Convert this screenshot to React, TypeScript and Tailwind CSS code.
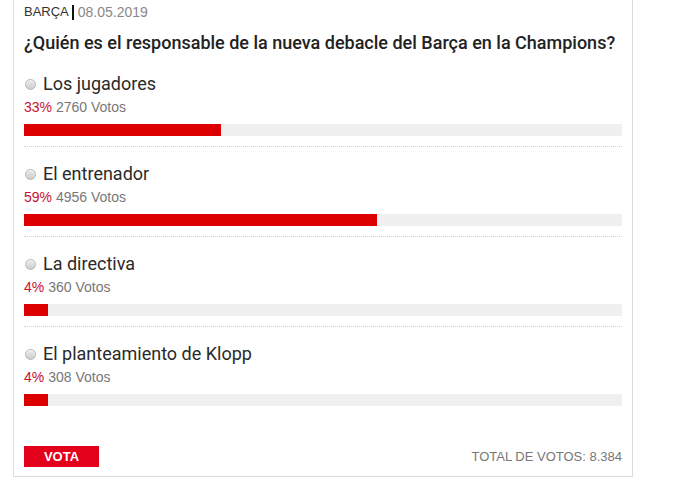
const options = [
  { label: "Los jugadores", pct: 33, votes: 2760 },
  { label: "El entrenador", pct: 59, votes: 4956 },
  { label: "La directiva", pct: 4, votes: 360 },
  { label: "El planteamiento de Klopp", pct: 4, votes: 308 },
];

const Radio = () => (
  <span className="inline-block h-[11px] w-[11px] shrink-0 rounded-full border border-[#b5b5b5] bg-gradient-to-b from-[#e9e9e9] to-[#cfcfcf] shadow-[inset_0_1px_1px_rgba(255,255,255,0.8)]" />
);

export default function App() {
  return (
    <div className="h-[485px] w-[686px] bg-white font-['Roboto',sans-serif]">
      <div className="ml-[13px] w-[620px] border-x border-b border-[#dcdcdc] px-[10px] pb-[9px]">
        {/* Header */}
        <div className="flex items-center pt-[4px] font-['Liberation_Sans',sans-serif] leading-[16px]">
          <span className="text-[13px] text-[#333]">BARÇA</span>
          <span className="ml-[3px] mr-[4px] h-[15px] w-[2px] bg-[#111]" />
          <span className="text-[14px] text-[#888]">08.05.2019</span>
        </div>
        <h1 className="mt-[11px] text-[18px] font-medium leading-[24px] text-[#222]">
          ¿Quién es el responsable de la nueva debacle del Barça en la Champions?
        </h1>

        {/* Options */}
        <div className="mt-[17px]">
          {options.map((o, i) => (
            <div
              key={o.label}
              className={
                i < options.length - 1
                  ? "mb-[15px] border-b border-dotted border-[#cfcfcf] pb-[10px]"
                  : ""
              }
            >
              <div className="flex items-center gap-[7px] pl-[1px] text-[18px] leading-[24px] text-[#2a2a2a]">
                <Radio />
                <span>{o.label}</span>
              </div>
              <div className="mt-[3px] font-['Liberation_Sans',sans-serif] text-[14px] leading-[16px]">
                <span className="text-[#c8102e]">{o.pct}%</span>{" "}
                <span className="text-[#777]">{o.votes} Votos</span>
              </div>
              <div className="mt-[9px] h-[12px] w-full bg-[#f0f0f0]">
                <div className="h-full bg-[#dd0000]" style={{ width: `${o.pct}%` }} />
              </div>
            </div>
          ))}
        </div>

        {/* Footer */}
        <div className="mt-[40px] flex items-center justify-between">
          <button className="flex h-[21px] w-[75px] items-center justify-center bg-[#e2001a] font-['Liberation_Sans',sans-serif] text-[13px] font-bold text-white">
            VOTA
          </button>
          <span className="font-['Liberation_Sans',sans-serif] text-[13px] text-[#777]">
            TOTAL DE VOTOS: 8.384
          </span>
        </div>
      </div>
    </div>
  );
}
